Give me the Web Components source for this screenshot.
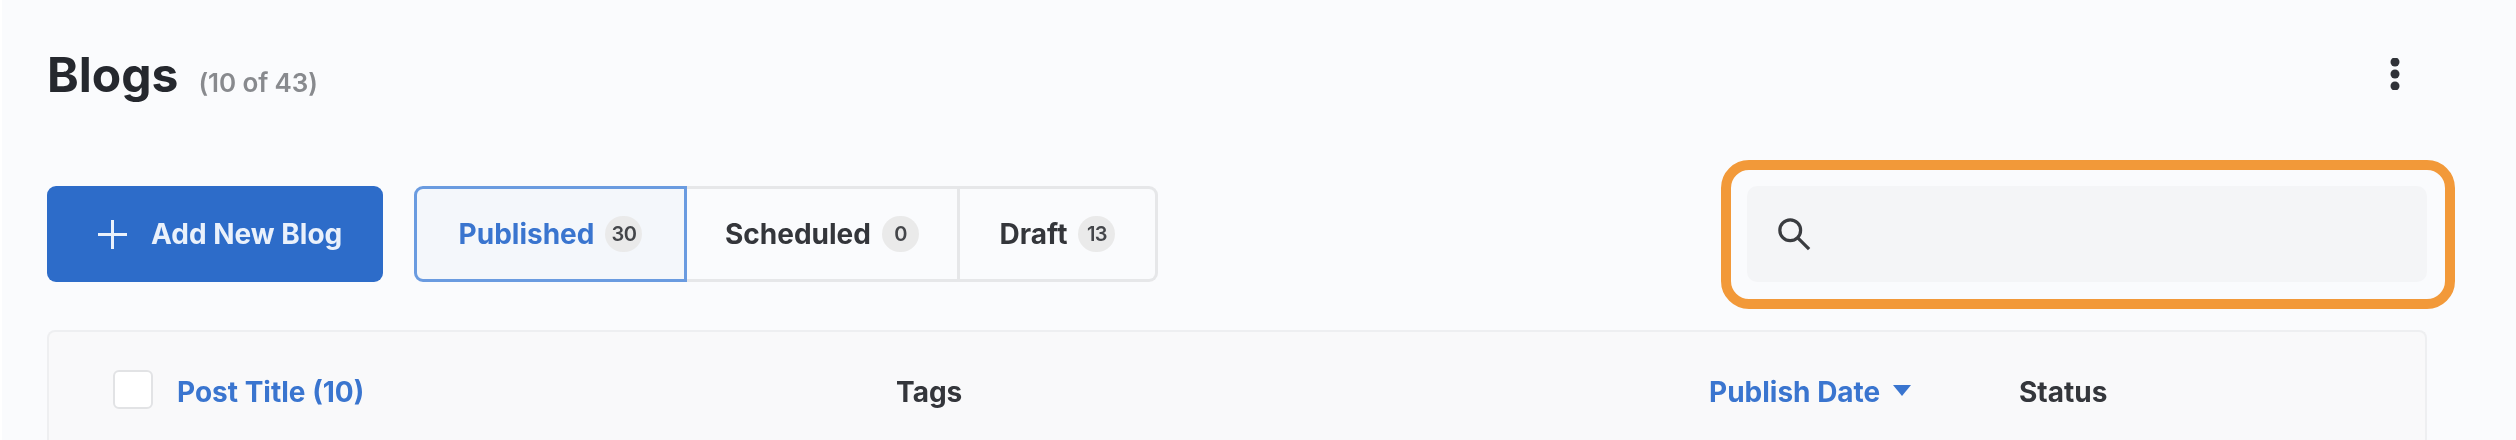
<!doctype html>
<html><head><meta charset="utf-8">
<style>
html,body{margin:0;height:440px;overflow:hidden;background:#fafbfd}
body{font-family:Inter,"Liberation Sans",sans-serif;border-left:2px solid #fff}
blog-page{filter:blur(.7px)}
</style></head><body>
<blog-page></blog-page>
<script>
function def(name,html){customElements.define(name,class extends HTMLElement{constructor(){super();this.attachShadow({mode:'open'}).innerHTML=html}})}
def('page-head',`<style>
:host{display:flex;align-items:center;justify-content:space-between;height:50px;margin-bottom:86px}
h1{margin:0;font:650 48px/50px Inter,sans-serif;color:#25282e}
span{font:600 26px/1 Inter,sans-serif;color:#888a8e;margin-left:20px;letter-spacing:-.1px}
.t{display:flex;align-items:baseline}
svg{display:block;margin-right:26px;margin-top:-2px}
</style><div class="t"><h1>Blogs</h1><span>(10 of 43)</span></div>
<svg width="12" height="32" viewBox="0 0 12 32"><g fill="#2f3238"><circle cx="6" cy="4" r="4.5"/><circle cx="6" cy="16" r="4.5"/><circle cx="6" cy="28" r="4.5"/></g></svg>`);
def('add-button',`<style>
:host{display:flex;align-items:center;gap:24px;box-sizing:border-box;width:336px;height:96px;padding-left:51px;background:#2d6cc9;border-radius:9px;color:#eaf1fb;font:650 28px/1 Inter,sans-serif}
svg{display:block}
</style><svg width="29" height="29" viewBox="0 0 29 29"><path d="M14.5 0v29M0 14.5h29" stroke="#eaf1fb" stroke-width="3" fill="none"/></svg><slot></slot>`);
def('tab-item',`<style>
:host{display:flex;align-items:center;justify-content:center;gap:11px;height:96px;box-sizing:border-box;font:650 28px/1 Inter,sans-serif;color:#34363b;border:3px solid #e6e7e9;border-left:0}
:host(:last-child){border-radius:0 9px 9px 0}
:host([active]){color:#3a75cf;background:#f4f7fb;border:3px solid #6a9be0;border-radius:9px 0 0 9px}
</style><slot></slot>`);
def('tab-count',`<style>:host{display:flex;align-items:center;justify-content:center;min-width:37px;height:36px;padding:0 2px;box-sizing:border-box;border-radius:18px;background:#eaeaea;color:#44464a;font:600 20px/1 Inter,sans-serif;letter-spacing:-.6px}</style><slot></slot>`);
def('tab-group',`<style>
:host{display:grid;grid-template-columns:273px 273px 198px;width:744px;height:96px;margin-left:31px}
</style><slot></slot>`);
def('search-box',`<style>
:host{display:flex;align-items:center;box-sizing:border-box;width:680px;height:96px;margin-left:auto;padding-left:30px;background:#f4f5f7;border-radius:10px;position:relative}
svg{display:block}
.note{position:absolute;left:-26px;right:-28px;top:-26px;bottom:-27px;border:10px solid #f29939;border-radius:28px;pointer-events:none}
</style><svg width="34" height="34" viewBox="0 0 36 36" fill="none" stroke="#3a3c40" stroke-width="3.4"><circle cx="14" cy="14" r="11"/><path d="M22 22l12 12"/></svg><div class="note"></div>`);
def('tool-bar',`<style>:host{display:flex;align-items:center;height:96px}</style><slot></slot>`);
def('table-head',`<style>
:host{display:block;box-sizing:border-box;height:120px;margin-top:48px;background:#f9f9fa;border:2px solid #eeeff1;border-bottom:0;border-radius:8px 8px 0 0;font:650 28px/1 Inter,sans-serif;color:#34363b}
.r{display:flex;align-items:center;height:120px}
i{box-sizing:border-box;width:40px;height:39px;background:#fff;border:2px solid #e2e3e5;border-radius:6px;margin-left:64px;margin-top:-6px}
.a{color:#3a75cf}.t{margin-left:24px;width:719px}.g{width:813px}.d{width:310px;display:flex;align-items:center;gap:13px}
svg{display:block;margin-top:-4px}
</style><div class="r"><i></i><span class="a t">Post Title (10)</span><span class="g">Tags</span><span class="a d">Publish Date<svg width="18" height="11" viewBox="0 0 18 11"><path d="M0 0h18L9 11z" fill="#3a75cf"/></svg></span><span>Status</span></div>`);
def('blog-page',`<style>:host{display:block;box-sizing:border-box;padding:50px 89px 0 45px;height:440px;overflow:hidden}
</style><page-head></page-head><tool-bar><add-button>Add New Blog</add-button><tab-group><tab-item active>Published<tab-count>30</tab-count></tab-item><tab-item>Scheduled<tab-count>0</tab-count></tab-item><tab-item>Draft<tab-count>13</tab-count></tab-item></tab-group><search-box></search-box></tool-bar><table-head></table-head>`);
</script>
</body></html>
